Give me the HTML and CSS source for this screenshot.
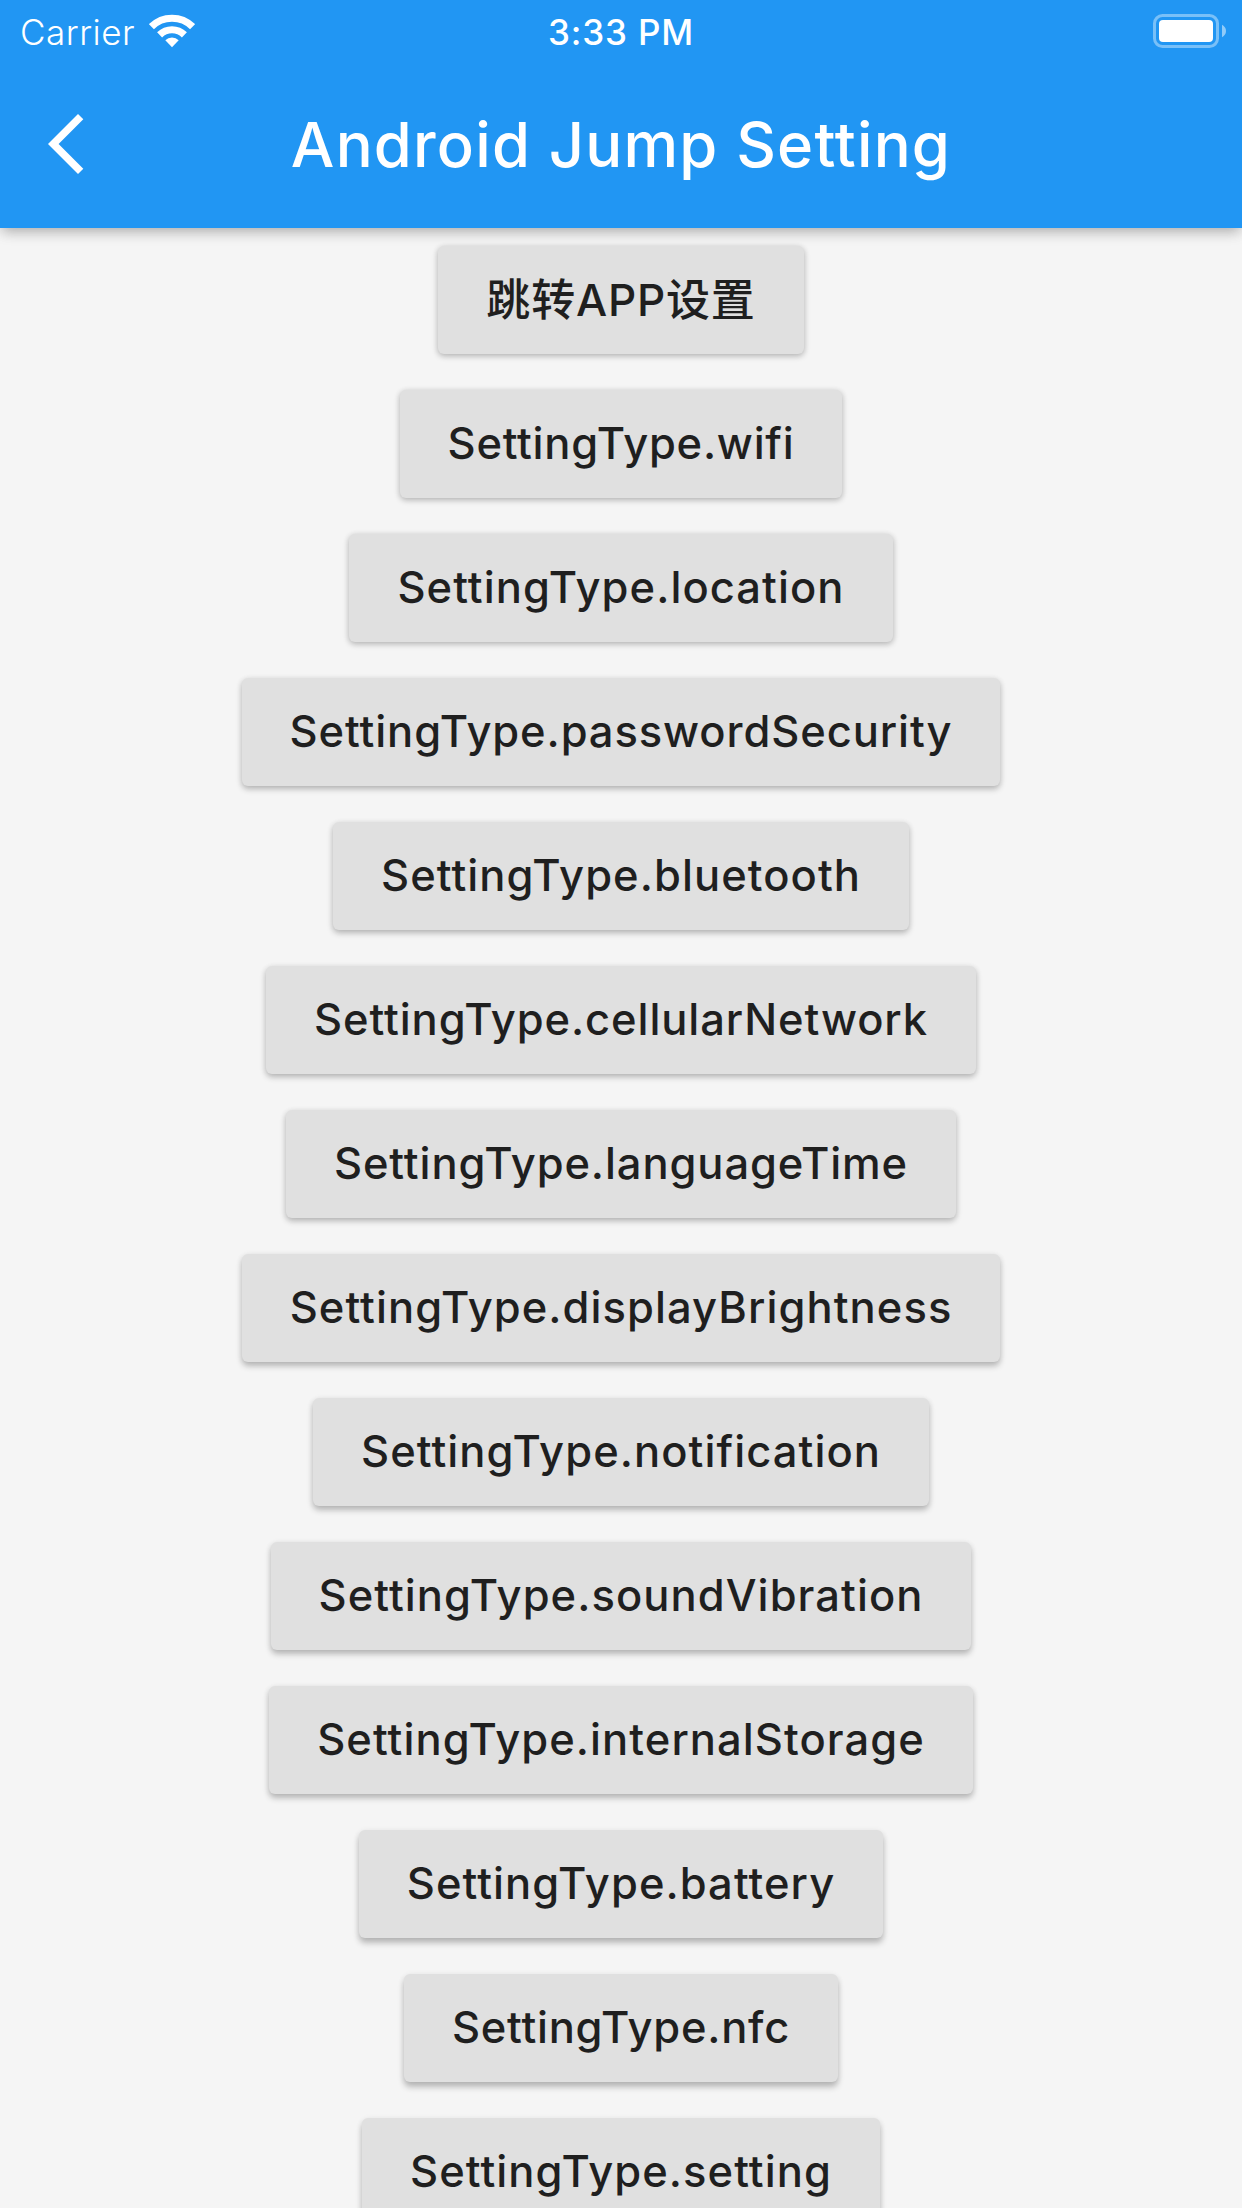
FILE: index.html
```html
<!DOCTYPE html>
<html lang="en">
<head>
<meta charset="utf-8">
<title>Android Jump Setting</title>
<link rel="stylesheet" href="styles.css">
</head>
<body>
<div class="screen">
  <header class="app-bar">
    <div class="status-bar">
      <div class="network">
        <span class="carrier">Carrier</span>
        <svg class="wifi" viewBox="0 0 46 34" width="46" height="34">
          <path d="M2.4 12.7A29.3 29.3 0 0 1 43.6 12.7M10.6 20.8A17.8 17.8 0 0 1 35.4 20.8" fill="none" stroke="#fff" stroke-width="7.2"/>
          <path d="M23 33.2L16.3 26.3A9.6 9.6 0 0 1 29.7 26.3Z" fill="#fff"/>
        </svg>
      </div>
      <span class="time">3:33 PM</span>
      <svg class="battery" viewBox="0 0 74 34" width="74" height="34">
        <rect x="1.5" y="1.5" width="63" height="31" rx="8" fill="none" stroke="#fff" stroke-opacity=".4" stroke-width="3"/>
        <rect x="6" y="6" width="54" height="22" rx="4" fill="#fff"/>
        <path d="M69 10.8Q73 13 73 17T69 23.2Z" fill="#fff" fill-opacity=".5"/>
      </svg>
    </div>
    <div class="toolbar">
      <svg class="back" viewBox="0 0 36 60" width="36" height="60">
        <path d="M30 0L35.3 5.3L10.6 30L35.3 54.7L30 60L0 30Z" fill="#fff"/>
      </svg>
      <h1 class="title">Android Jump Setting</h1>
    </div>
  </header>
  <main class="list">
    <button class="btn btn-cjk">跳转APP设置</button>
    <button class="btn btn-tight">SettingType.wifi</button>
    <button class="btn">SettingType.location</button>
    <button class="btn btn-snug">SettingType.passwordSecurity</button>
    <button class="btn">SettingType.bluetooth</button>
    <button class="btn btn-snug">SettingType.cellularNetwork</button>
    <button class="btn btn-snug">SettingType.languageTime</button>
    <button class="btn">SettingType.displayBrightness</button>
    <button class="btn">SettingType.notification</button>
    <button class="btn">SettingType.soundVibration</button>
    <button class="btn">SettingType.internalStorage</button>
    <button class="btn">SettingType.battery</button>
    <button class="btn btn-tight">SettingType.nfc</button>
    <button class="btn">SettingType.setting</button>
  </main>
</div>
</body>
</html>
```
FILE: styles.css
```css
* { box-sizing: border-box; }

body {
  margin: 0;
  background: #f5f5f5;
  font-family: Inter, "Noto Sans CJK SC", sans-serif;
}

.screen {
  display: flex;
  flex-direction: column;
  height: 2208px;
  overflow: hidden;
}

.app-bar {
  flex: none;
  height: 228px;
  background: #2196f3;
  color: #fff;
  box-shadow: 0 6px 12px -3px rgba(0, 0, 0, .2), 0 3px 15px rgba(0, 0, 0, .14);
}

.status-bar {
  display: grid;
  grid-template-columns: 1fr auto 1fr;
  align-items: center;
  height: 60px;
  padding: 0 15px 0 20px;
  font-size: 35px;
  line-height: 60px;
}

.network {
  display: flex;
  align-items: center;
  gap: 14px;
}

.carrier { padding-top: 2px; font-weight: 350; letter-spacing: .5px; }
.time { margin-right: 5px; padding-top: 2px; font-weight: 500; letter-spacing: .8px; }
.battery { justify-self: end; }

.toolbar {
  display: grid;
  grid-template-columns: 100px 1fr 100px;
  align-items: center;
  height: 168px;
}

.back { margin-left: 48px; }

.title {
  margin: 0;
  padding-top: 2px;
  text-align: center;
  font-size: 61.5px;
  font-weight: 500;
  letter-spacing: 1.2px;
  line-height: 80px;
  white-space: nowrap;
}

.list {
  display: flex;
  flex-direction: column;
  align-items: center;
  gap: 36px;
  padding-top: 18px;
}

.btn {
  --drop: 2px;
  flex: none;
  height: 108px;
  padding: 0 48px 2px;
  border: 0;
  border-radius: 6px;
  background: #e0e0e0;
  color: #1f1f1f;
  font: 450 43.5px/60px Inter, "Noto Sans CJK SC", sans-serif;
  letter-spacing: 1.06px;
  white-space: nowrap;
  box-shadow: 0 var(--drop) 6px rgba(0, 0, 0, .24), 0 1px 6px rgba(0, 0, 0, .07);
}

/* The shadow falls further the lower a button sits. */
.btn:nth-child(n + 4) { --drop: 3px; }
.btn:nth-child(n + 8) { --drop: 4px; }
.btn:nth-child(n + 12) { --drop: 5px; }

.btn-snug { letter-spacing: .9px; }
.btn-tight { letter-spacing: .75px; }
.btn-cjk { padding-bottom: 0; font-size: 44px; font-weight: 500; letter-spacing: .8px; }
```
